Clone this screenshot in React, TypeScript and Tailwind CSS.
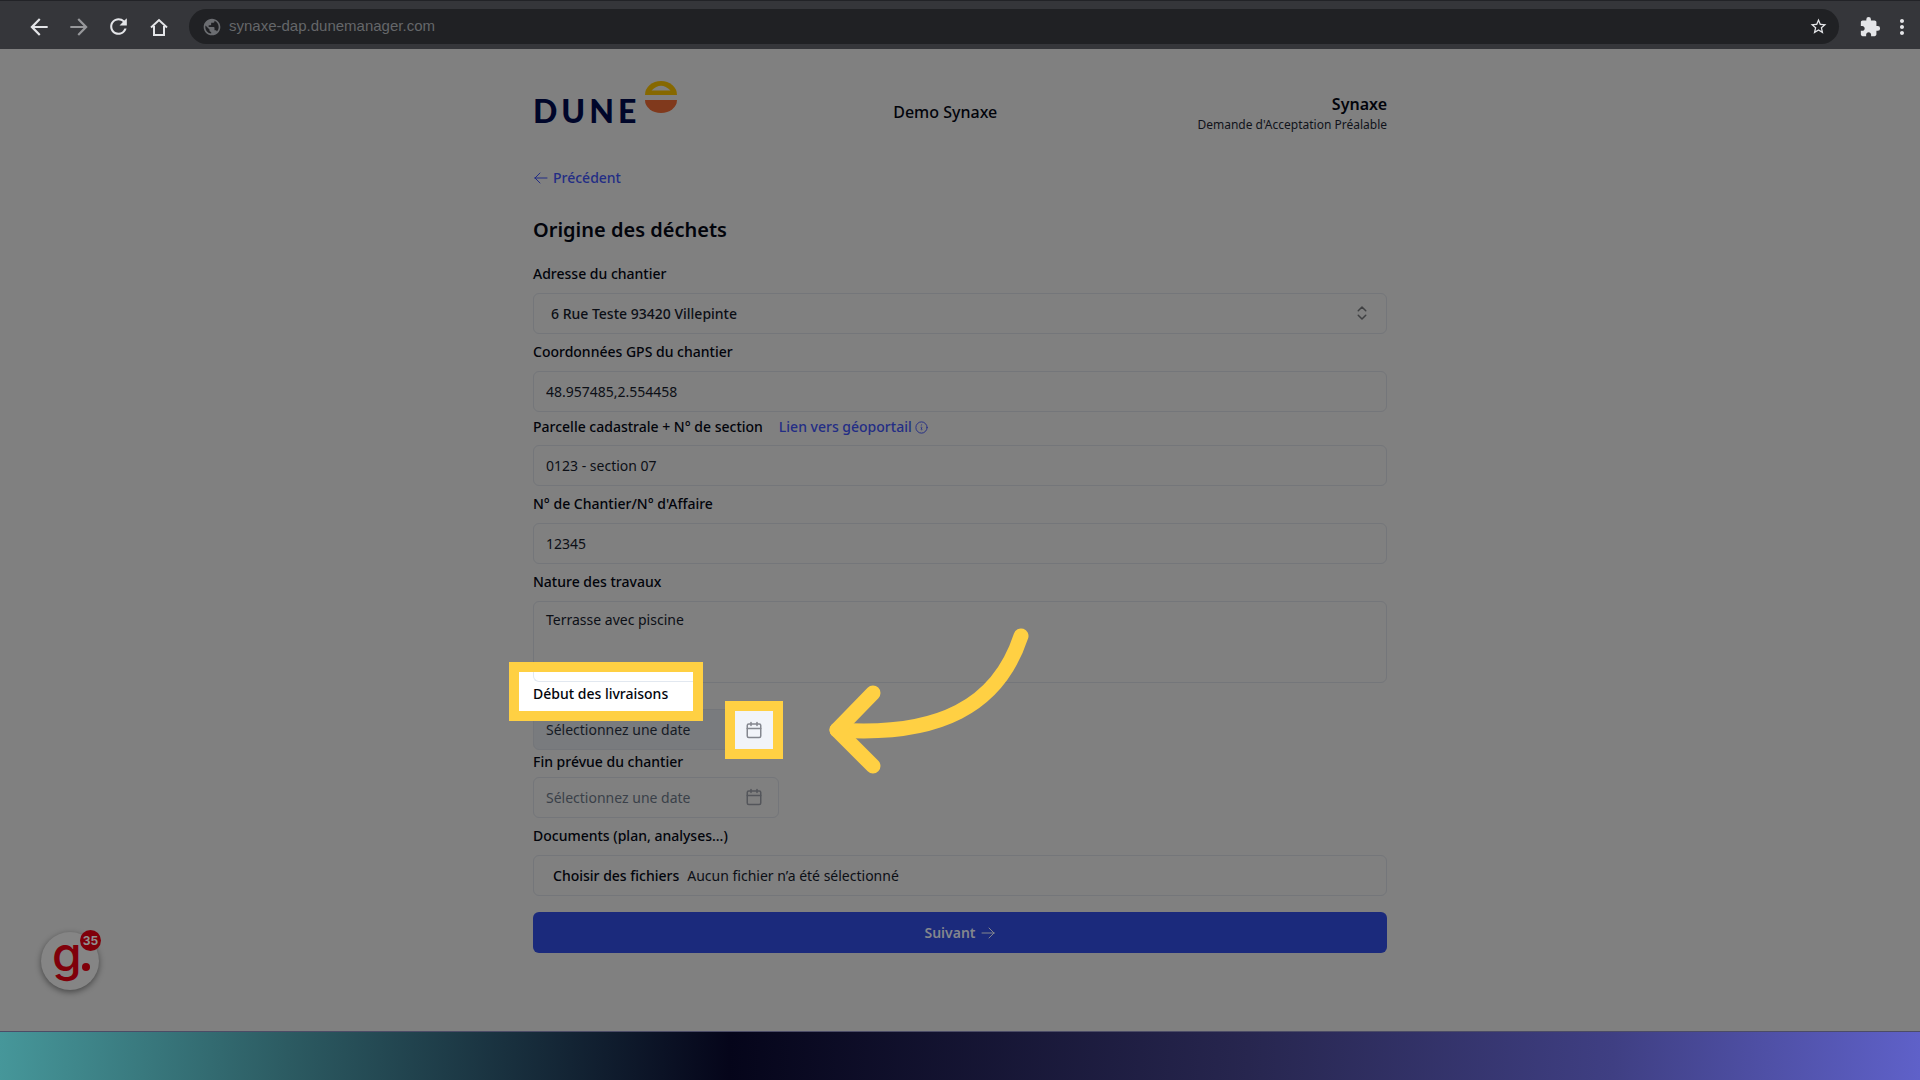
import type { ReactNode } from 'react';
import { Calendar, ChevronsUpDown } from 'lucide-react';
import { HiOutlineArrowLeft, HiOutlineArrowRight, HiOutlineInformationCircle } from 'react-icons/hi2';
import {
  MdArrowBack,
  MdArrowForward,
  MdExtension,
  MdMoreVert,
  MdPublic,
  MdRefresh,
  MdStarBorder,
} from 'react-icons/md';

const fieldClass =
  'block w-full h-[41px] rounded-md border border-[#74767a] px-3 text-sm text-[#0c0f16] outline-none';

function BrowserBar() {
  return (
    <header className="flex h-[49px] items-center border-t border-[#222327] bg-[#35363a] pl-[26px] pr-[6px] pt-[3px] text-[#e4e5e8]">
      <nav className="flex items-center gap-[14px]" aria-label="Navigation">
        <button type="button" aria-label="Back">
          <MdArrowBack size={26} />
        </button>
        <button type="button" aria-label="Forward" className="text-[#97989b]">
          <MdArrowForward size={26} />
        </button>
        <button type="button" aria-label="Reload">
          <MdRefresh size={25} />
        </button>
        <button type="button" aria-label="Home" className="pl-[2px]">
          <svg width="24" height="24" viewBox="0 0 24 24" fill="none" stroke="currentColor" strokeWidth="2">
            <path d="M4 12.500 12 5l8 7.500M7 11v9h10v-9" />
          </svg>
        </button>
      </nav>
      <div className="ml-[18px] flex h-[35px] flex-1 items-center rounded-full bg-[#202124] pl-[13px] pr-[11px]">
        <MdPublic size={20} className="text-[#6b6d71]" />
        <input
          type="text"
          aria-label="Address"
          defaultValue="synaxe-dap.dunemanager.com"
          className="ml-[7px] flex-1 bg-transparent font-['Liberation_Sans',sans-serif] text-[15px] text-[#65676a] outline-none"
        />
        <button type="button" aria-label="Bookmark">
          <MdStarBorder size={19} />
        </button>
      </div>
      <button type="button" aria-label="Extensions" className="ml-5">
        <MdExtension size={22} />
      </button>
      <button type="button" aria-label="Menu" className="ml-[9px]">
        <MdMoreVert size={24} />
      </button>
    </header>
  );
}

function Logo() {
  return (
    <div className="flex w-40 items-start text-[#00062a]">
      <span className="mt-[14px] w-28 font-['Lato',sans-serif] text-[32px] leading-8 font-black tracking-[4px]">
        DUNE
      </span>
      <svg width="32" height="32" viewBox="0 0 32 32">
        <path d="M0 14a16 14 0 0 1 32 0z" fill="#866800" />
        <path d="M6.500 9.500Q16 0 25.500 9.500z" fill="#808080" />
        <path d="M0 19h32a16 13 0 0 1-32 0z" fill="#80391c" />
      </svg>
    </div>
  );
}

function Label({ htmlFor, className, children }: { htmlFor: string; className?: string; children: ReactNode }) {
  return (
    <label htmlFor={htmlFor} className={`block w-fit text-sm leading-5 font-medium ${className ?? ''}`}>
      {children}
    </label>
  );
}

function CurvedArrow() {
  return (
    <svg
      className="pointer-events-none absolute top-[-81px] left-[296px] z-20"
      width="200"
      height="146"
      viewBox="0 0 200 146"
      fill="none"
      stroke="#ffd043"
      strokeWidth="15"
      strokeLinecap="round"
      strokeLinejoin="round"
    >
      <path d="M192 8C169 78 110 109 8 102" />
      <path d="M44 65 8 102l36 36" />
    </svg>
  );
}

export default function App() {
  return (
    <div className="flex min-h-screen flex-col bg-[#05051a] font-['Noto_Sans',sans-serif] text-[#02040b]">
      <BrowserBar />
      <main className="relative flex-1 bg-[#808080]">
        <div className="mx-auto w-full max-w-[854px] pt-8 pb-[76px]">
          <div className="flex items-start justify-between">
            <Logo />
            <p className="mt-[19px] text-center text-base leading-6 font-medium">Demo Synaxe</p>
            <div className="mt-[13px] text-right">
              <p className="text-base leading-5 font-semibold">Synaxe</p>
              <p className="mt-px text-xs leading-5 text-[#10131a]">Demande d'Acceptation Préalable</p>
            </div>
          </div>

          <a href="#precedent" className="mt-[33px] flex w-fit items-center gap-1 text-sm leading-5 font-medium text-[#232d85]">
            <HiOutlineArrowLeft size={16} />
            Précédent
          </a>
          <h1 className="mt-7 text-xl leading-7 font-semibold">Origine des déchets</h1>

          <form>
            <Label htmlFor="adresse" className="mt-5">Adresse du chantier</Label>
            <div className="relative mt-[9px]">
              <select id="adresse" className={`${fieldClass} appearance-none pl-[17px] font-medium`}>
                <option>6 Rue Teste 93420 Villepinte</option>
              </select>
              <ChevronsUpDown size={18} className="pointer-events-none absolute top-[11px] right-4 text-[#3f4042]" />
            </div>

            <Label htmlFor="gps" className="mt-2">Coordonnées GPS du chantier</Label>
            <input id="gps" type="text" defaultValue="48.957485,2.554458" className={`${fieldClass} mt-[9px]`} />

            <div className="mt-[5px] flex items-center gap-4">
              <Label htmlFor="parcelle">Parcelle cadastrale + N° de section</Label>
              <a href="#geoportail" className="flex items-center gap-[2px] text-sm leading-5 font-medium text-[#232d85]">
                Lien vers géoportail
                <HiOutlineInformationCircle size={15} />
              </a>
            </div>
            <input id="parcelle" type="text" defaultValue="0123 - section 07" className={`${fieldClass} mt-2`} />

            <Label htmlFor="affaire" className="mt-2">N° de Chantier/N° d'Affaire</Label>
            <input id="affaire" type="text" defaultValue="12345" className={`${fieldClass} mt-[9px]`} />

            <Label htmlFor="nature" className="mt-2">Nature des travaux</Label>
            <textarea
              id="nature"
              defaultValue="Terrasse avec piscine"
              className="mt-[9px] block h-[82px] w-full resize-none rounded-md border border-[#74767a] px-3 py-2 text-sm text-[#0c0f16] outline-none"
            />

            <div className="relative mt-px w-fit">
              <div className="absolute top-[-22px] left-[-24px] z-10 h-[59px] w-[194px] overflow-hidden border-10 border-[#ffd043] bg-white">
                <div className="ml-[14px] h-[10px] w-[200px] rounded-bl-md border-b border-l border-[#e2e8f0]" />
              </div>
              <Label htmlFor="debut" className="relative z-20">Début des livraisons</Label>
            </div>
            <div className="relative mt-[5px] w-[246px]">
              <input
                id="debut"
                type="text"
                readOnly
                placeholder="Sélectionnez une date"
                className={`${fieldClass} bg-[#797b7e] placeholder:text-[#151a24]`}
              />
              <button
                type="button"
                aria-label="Choisir la date de début"
                className="absolute top-[-8px] right-[-4px] z-10 flex h-[58px] w-[58px] items-center justify-center border-10 border-[#ffd043] bg-[#f1f4f9] text-[#84878f]"
              >
                <Calendar size={18} />
              </button>
              <CurvedArrow />
            </div>

            <Label htmlFor="fin" className="mt-[2px]">Fin prévue du chantier</Label>
            <div className="relative mt-[5px] w-[246px]">
              <input
                id="fin"
                type="text"
                readOnly
                placeholder="Sélectionnez une date"
                className={`${fieldClass} placeholder:text-[#3a4049]`}
              />
              <button
                type="button"
                aria-label="Choisir la date de fin"
                className="absolute top-[11px] right-4 text-[#54565b]"
              >
                <Calendar size={18} />
              </button>
            </div>

            <Label htmlFor="documents" className="mt-2">Documents (plan, analyses...)</Label>
            <div className={`${fieldClass} mt-[9px]`}>
              <input id="documents" type="file" multiple className="sr-only" />
              <div className="flex h-full items-center gap-2 pl-[7px]">
                <label htmlFor="documents" className="font-medium text-[#02040b]">
                  Choisir des fichiers
                </label>
                <span>Aucun fichier n’a été sélectionné</span>
              </div>
            </div>

            <button
              type="submit"
              className="mt-4 flex h-[41px] w-full items-center justify-center gap-1 rounded-md bg-[#1b2a7c] text-sm font-semibold text-[#84868d]"
            >
              Suivant
              <HiOutlineArrowRight size={16} />
            </button>
          </form>
        </div>

        <button
          type="button"
          aria-label="Guides"
          className="absolute bottom-[41px] left-[41px] h-[58px] w-[58px] rounded-full bg-[#858585] text-[#80000a] shadow-[0_2px_6px_rgba(0,0,0,0.45)]"
        >
          <span className="absolute top-[-7px] left-[11px] font-['Inter',sans-serif] text-[48px] leading-[58px] font-medium">g</span>
          <span className="absolute top-[31px] left-[41px] h-2 w-2 rounded-full bg-[#80000a]" />
          <span className="absolute top-[-2px] left-[39px] flex h-[21px] w-[21px] items-center justify-center rounded-full bg-[#80000a] font-['Inter',sans-serif] text-xs font-bold text-[#909090]">
            35
          </span>
        </button>
      </main>
      <footer className="h-[49px] border-t border-[#4c4c66] bg-[linear-gradient(92deg,#46979a_0%,#2c5b62_15%,#05051a_38%,#27264f_65%,#3f3f83_84%,#5f61c9_100%)]" />
    </div>
  );
}
